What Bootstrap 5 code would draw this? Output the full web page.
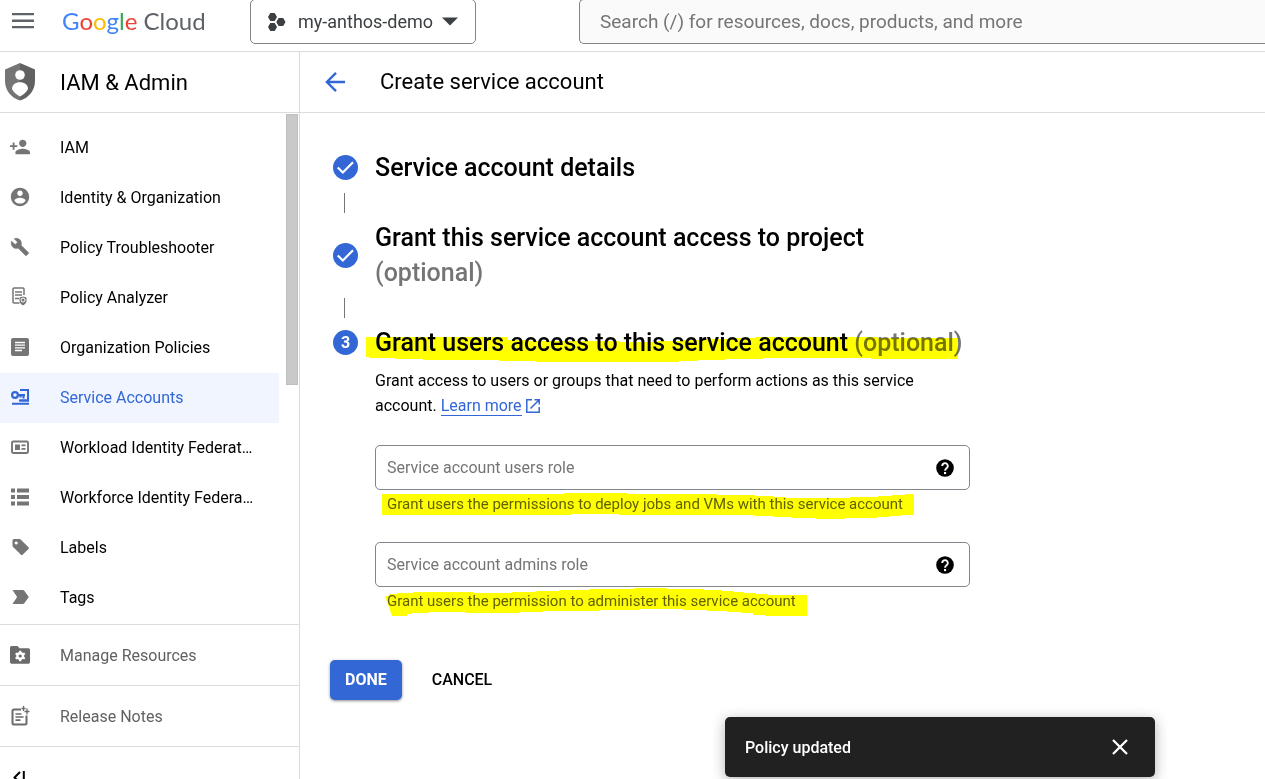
<!DOCTYPE html>
<html lang="en">
<head>
<meta charset="utf-8">
<meta name="viewport" content="width=device-width, initial-scale=1">
<title>Create service account – IAM &amp; Admin</title>
<link href="https://cdn.jsdelivr.net/npm/bootstrap@5.3.0/dist/css/bootstrap.min.css" rel="stylesheet">
<style>
  :root { --g-blue: #3367d6; --g-line: #dadce0; --g-grey: #757575; }
  body { font-family: Roboto, "Liberation Sans", sans-serif; font-size: 16px; line-height: 25px; color: #000; background: #fff; }
  svg { display: block; flex: none; }
  .topbar { height: 52px; border-bottom: 1px solid var(--g-line); flex: none; }
  .icon-btn { border: 0; background: none; padding: 0; color: inherit; }
  .menu-btn { width: 62px; padding-left: 12px; color: #5f6368; }
  .brand { font: 24px/42px Lato, sans-serif; color: #5f6368; width: 188px; }
  .brand:hover { color: #5f6368; }
  .c-b { color: #4285f4; } .c-r { color: #ea4335; } .c-y { color: #fbbc05; } .c-g { color: #34a853; }
  .top-field { height: 45px; margin-top: -1px; border: 1px solid #80868b; border-radius: 5px; }
  .project-btn { width: 226px; padding: 0 17px; background: #fff; color: #3c4043; font-size: 18px; margin-right: 103px; }
  .search-box { background: #fafafa; border-right: 0; border-radius: 5px 0 0 5px; padding: 0 20px; font-size: 19px; min-width: 0; }
  .search-box::placeholder, .role-field input::placeholder { color: var(--g-grey); opacity: 1; }
  .sidebar { width: 300px; border-right: 1px solid var(--g-line); flex: none; }
  .title-row { height: 61px; border-bottom: 1px solid var(--g-line); flex: none; font-size: 22px; }
  .title-row h1 { font-size: inherit; }
  .side-title { padding-left: 5px; gap: 25px; }
  .side-list { width: 279px; padding: 10px 0 1px; }
  .side-link { height: 50px; padding: 0 23px 2px 9px; gap: 29px; color: #000; text-decoration: none; }
  .side-link svg { color: var(--g-grey); }
  .side-link.active { background: #f0f5ff; color: var(--g-blue); }
  .side-link.active svg { color: var(--g-blue); }
  .scroll-thumb { width: 12px; height: 271px; margin: 1px 1px 0 0; background: #c9c9c9; border: 1px solid #bdbdbd; }
  .side-foot { height: 61px; padding-bottom: 0; border-top: 1px solid var(--g-line); color: #616161; }
  .side-foot svg { color: #6b6b6b; }
  .collapse-btn { padding: 22px 0 0 9px; border-top: 1px solid var(--g-line); }
  .main-title { padding-left: 25px; gap: 34px; }
  .steps { padding: 37px 30px 0 33px; max-width: 695px; }
  .step { gap: 17px; }
  .step h2 { font-size: 25px; line-height: 35px; font-weight: 500; margin: 0; }
  .step h2 span { color: var(--g-grey); }
  .step-num { width: 25px; height: 25px; border-radius: 50%; background: var(--g-blue); color: #fff; flex: none; font-weight: 700; }
  .connector { width: 1px; height: 20px; margin: 8px 0 7px 11px; background: var(--g-grey); }
  .step-body { padding: 8px 0 0 42px; margin-right: -5px; }
  .intro { margin-bottom: 27px; }
  .learn { color: var(--g-blue); text-decoration: none; border-bottom: 1px solid var(--g-blue); }
  .role-field { height: 45px; border: 1px solid #80868b; border-radius: 5px; padding: 0 12px 0 11px; }
  .role-field input { border: 0; outline: 0; padding: 0; min-width: 0; background: none; }
  .helper { font-size: 15px; line-height: 20px; margin: 4px 0 28px; padding-left: 12px; color: #616161; }
  .marker { position: absolute; mix-blend-mode: multiply; pointer-events: none; fill: #ff0; overflow: visible; }
  .actions { padding: 21px 30px; gap: 15px; }
  .btn-flat { height: 40px; padding: 0 15px; border: 0; border-radius: 5px; font-size: 16px; font-weight: 500; color: #000; }
  .btn-done, .btn-done:hover { background: var(--g-blue); color: #fff; font-weight: 700; box-shadow: 0 1px 3px rgba(0,0,0,.45); }
  .snack { right: 110px; bottom: 2px; width: 430px; max-width: 80vw; height: 60px; padding: 0 23px 0 20px; border-radius: 5px; background: #212121; color: #fff; font-weight: 500; box-shadow: 0 3px 14px rgba(0,0,0,.3); z-index: 5; }
</style>
</head>
<body class="d-flex flex-column vh-100 overflow-hidden">

<header class="topbar d-flex align-items-start overflow-hidden">
  <button class="icon-btn menu-btn" type="button" aria-label="Main menu">
    <svg class="mt-2" width="24" height="26" viewBox="0 0 24 26" fill="currentColor"><path d="M0 5h22v2.300H0zM0 11.600h22v2.300H0zM0 18h22v2.300H0z"/></svg>
  </button>
  <a class="brand text-decoration-none text-nowrap" href="#"><span class="c-b">G</span><span class="c-r">o</span><span class="c-y">o</span><span class="c-b">g</span><span class="c-g">l</span><span class="c-r">e</span> Cloud</a>
  <button class="top-field project-btn d-flex align-items-center flex-shrink-0 text-nowrap" type="button">
    <svg width="18" height="20" viewBox="0 0 18 20" fill="currentColor"><path d="M2.300 1h4.400L9 5 6.700 9H2.300L0 5zM2.300 11h4.400L9 15l-2.300 4H2.300L0 15zM10.600 6h4.600L17.500 10l-2.300 4h-4.600L8.300 10z"/></svg>
    <span class="ms-2 ps-1">my-anthos-demo</span>
    <svg class="ms-auto" width="16" height="9" viewBox="0 0 16 9" fill="currentColor"><path d="M0 .5h16L8 8.500z"/></svg>
  </button>
  <input class="top-field search-box flex-grow-1" type="search" aria-label="Search" placeholder="Search (/) for resources, docs, products, and more">
</header>

<div class="d-flex flex-grow-1 overflow-hidden">
  <aside class="sidebar d-flex flex-column overflow-hidden">
    <div class="title-row side-title d-flex align-items-center">
      <svg width="30" height="38" viewBox="0 0 30 38"><path fill="#757575" d="M15 0 0 6.500v11.500c0 9 6 17 15 19.500z"/><path fill="#616161" d="M15 0l15 6.500v11.500c0 9-6 17-15 19.500z"/><circle cx="15" cy="12" r="4.800" fill="#fff"/><path fill="#fff" d="M7 26c0-4.500 3.500-6.800 8-6.800s8 2.300 8 6.800c-1.500 3-4.500 6-8 7.500-3.500-1.500-6.500-4.500-8-7.500z"/></svg>
      <span>IAM &amp; Admin</span>
    </div>
    <div class="d-flex justify-content-between flex-shrink-0">
      <nav class="side-list" aria-label="IAM sections">
        <a class="side-link d-flex align-items-center" href="#"><svg width="22" height="22" viewBox="0 0 24 24" fill="currentColor"><path d="M15 12c2.210 0 4-1.790 4-4s-1.790-4-4-4-4 1.790-4 4 1.790 4 4 4zm-9-2V7H4v3H1v2h3v3h2v-3h3v-2H6zm9 4c-2.670 0-8 1.340-8 4v2h16v-2c0-2.660-5.330-4-8-4z"/></svg><span class="text-truncate">IAM</span></a>
        <a class="side-link d-flex align-items-center" href="#"><svg width="22" height="22" viewBox="0 0 24 24" fill="currentColor"><path d="M12 2C6.480 2 2 6.480 2 12s4.480 10 10 10 10-4.480 10-10S17.520 2 12 2zm0 3c1.660 0 3 1.340 3 3s-1.340 3-3 3-3-1.340-3-3 1.340-3 3-3zm0 14.200c-2.500 0-4.710-1.280-6-3.220.030-1.990 4-3.080 6-3.080 1.990 0 5.970 1.090 6 3.080-1.290 1.940-3.500 3.220-6 3.220z"/></svg><span class="text-truncate">Identity &amp; Organization</span></a>
        <a class="side-link d-flex align-items-center" href="#"><svg width="22" height="22" viewBox="0 0 24 24" fill="currentColor"><g transform="translate(1.500 1.500) scale(.87)"><path d="M22.700 19l-9.100-9.100c.9-2.300.4-5-1.500-6.900-2-2-5-2.400-7.400-1.300L9 6 6 9 1.600 4.700C.4 7.100.9 10.100 2.900 12.100c1.900 1.900 4.600 2.400 6.900 1.500l9.100 9.100c.4.400 1 .4 1.400 0l2.300-2.300c.5-.4.5-1.100.1-1.400z" stroke="currentColor" stroke-width=".5"/></g></svg><span class="text-truncate">Policy Troubleshooter</span></a>
        <a class="side-link d-flex align-items-center" href="#"><svg width="22" height="22" viewBox="0 0 22 22" fill="none" stroke="currentColor" stroke-width="1.500"><path d="M10.500 17H5q-1 0-1-1V3q0-1 1-1h9q1 0 1 1v6M6 6h7M6 9h7M6 12.500h4"/><path fill="currentColor" stroke="none" d="M14 10.500l3.500 1v3c0 2-1.500 4-3.500 5-2-1-3.500-3-3.500-5v-3z"/><circle cx="14" cy="14" r="2" stroke="#fff" stroke-width="1"/></svg><span class="text-truncate">Policy Analyzer</span></a>
        <a class="side-link d-flex align-items-center" href="#"><svg width="22" height="22" viewBox="0 0 22 22"><rect x="2" y="2" width="18" height="18" rx="2" fill="currentColor"/><path d="M6 6.500h10M6 9.200h10M6 11.900h10M6 14.500h7" stroke="#fff" stroke-width="1.300"/></svg><span class="text-truncate">Organization Policies</span></a>
        <a class="side-link active d-flex align-items-center" href="#" aria-current="page"><svg width="22" height="22" viewBox="0 0 22 22" fill="none" stroke="currentColor"><path d="M11 4h8v10.500h-8" stroke-width="2"/><circle cx="6" cy="9" r="2.900" stroke-width="2.200"/><path d="M9 9h7M14.500 9v3.500M11.500 9v2.500" stroke-width="2.200"/><path d="M3 17.800h17M10 14.500h10" stroke-width="2"/></svg><span class="text-truncate">Service Accounts</span></a>
        <a class="side-link d-flex align-items-center" href="#"><svg width="22" height="22" viewBox="0 0 22 22" fill="none" stroke="currentColor"><rect x="3" y="5.500" width="16" height="11.500" rx="1.200" stroke-width="1.900"/><path fill="currentColor" stroke="none" d="M6 8.500h5v5.500H6zM12.500 8.500h4v1.700h-4zM12.500 12h4v1.700h-4z"/></svg><span class="text-truncate">Workload Identity Federat…</span></a>
        <a class="side-link d-flex align-items-center" href="#"><svg width="22" height="22" viewBox="0 0 22 22" fill="currentColor"><path d="M2 2.500h4v4H2zM8 2.500h12v4H8zM2 9h4v4H2zM8 9h12v4H8zM2 15.500h4v4H2zM8 15.500h12v4H8z"/></svg><span class="text-truncate">Workforce Identity Federa…</span></a>
        <a class="side-link d-flex align-items-center" href="#"><svg width="22" height="22" viewBox="0 0 22 22" fill="currentColor"><path fill-rule="evenodd" d="M5 3h5.500q.7 0 1.200.5l7.800 7.800q.8.800 0 1.600l-5.900 5.900q-.8.800-1.600 0L4.100 11Q3.500 10.500 3.500 9.700V4.500Q3.500 3 5 3zm2.200 2.400a1.600 1.600 0 1 0 .01 0z"/></svg><span class="text-truncate">Labels</span></a>
        <a class="side-link d-flex align-items-center" href="#"><svg width="22" height="22" viewBox="0 0 22 22" fill="currentColor"><path d="M3.500 4h10.300q.9 0 1.500.8l4.500 6.200-4.500 6.200q-.6.800-1.500.8H3.500l4.600-7z"/></svg><span class="text-truncate">Tags</span></a>
      </nav>
      <div class="scroll-thumb"></div>
    </div>
    <a class="side-link side-foot d-flex align-items-center flex-shrink-0" href="#"><svg width="22" height="22" viewBox="0 0 22 22"><path fill="currentColor" d="M2.500 2h6l2 2.300h9q1.500 0 1.500 1.500V18q0 1.700-1.500 1.700h-17Q1 19.700 1 18V3.500Q1 2 2.500 2z"/><circle cx="11.200" cy="12" r="2.800" fill="none" stroke="#fff" stroke-width="2.400"/><path d="M11.200 6.700v2.200M11.200 15.100v2.200M6.600 9.400l1.900 1.100M13.900 13.500l1.900 1.100M6.600 14.600l1.900-1.100M13.900 10.500l1.900-1.100" stroke="#fff" stroke-width="2.200"/></svg><span>Manage Resources</span></a>
    <a class="side-link side-foot d-flex align-items-center flex-shrink-0" href="#"><svg width="22" height="22" viewBox="0 0 22 22" fill="none" stroke="currentColor" stroke-width="2"><path d="M12 4.500H5q-1.500 0-1.500 1.500v12q0 1.500 1.500 1.500h11q1.500 0 1.500-1.500v-7.500"/><path d="M6.500 9h6M6.500 12h8M6.500 15.200h5" stroke-width="1.700"/><path d="M14.500 1v5M12.500 3.500h4M18 3.500v6M15.500 6.500h5" stroke-width="1.300"/></svg><span>Release Notes</span></a>
    <button class="icon-btn collapse-btn flex-shrink-0 text-start" type="button" aria-label="Collapse navigation">
      <svg width="22" height="22" viewBox="0 0 22 22" fill="none" stroke="#000" stroke-width="2"><path d="M11 3 5.500 8.500 11 14M14.800 2v13"/></svg>
    </button>
  </aside>

  <main class="flex-grow-1 overflow-hidden">
    <div class="title-row main-title d-flex align-items-center">
      <button class="icon-btn" type="button" aria-label="Back"><svg width="21" height="22" viewBox="0 0 21 22" fill="none" stroke="#3367d6" stroke-width="2.400"><path d="M20 11H2M11 1.900 1.900 11 11 20.100"/></svg></button>
      <h1 class="m-0 fw-normal">Create service account</h1>
    </div>

    <div class="steps">
      <div class="step d-flex align-items-center">
        <span class="step-num"><svg width="25" height="25" viewBox="0 0 25 25" fill="none" stroke="#fff" stroke-width="2.200"><path d="M4.800 12.500l5 5L20 7.200"/></svg></span>
        <h2>Service account details</h2>
      </div>
      <div class="connector"></div>
      <div class="step d-flex align-items-center">
        <span class="step-num"><svg width="25" height="25" viewBox="0 0 25 25" fill="none" stroke="#fff" stroke-width="2.200"><path d="M4.800 12.500l5 5L20 7.200"/></svg></span>
        <h2>Grant this service account access to project <span class="d-block">(optional)</span></h2>
      </div>
      <div class="connector"></div>
      <div class="step d-flex align-items-center">
        <span class="step-num text-center">3</span>
        <h2 class="position-relative text-nowrap">Grant users access to this service account <span>(optional)</span>
          <svg class="marker start-0 top-0" width="595" height="35" viewBox="375 325 595 35"><path d="M366 337H508v3h22v1h90v1h38v-1h22v-1h22v-1h30v-1h23v-1h123v1h80V359h-87v-1h-108v1h-37v1h-28v1h-19v1h-143v-1h-37v-1h-76v-1h-28v-1h-26v-1h-3z"/></svg>
        </h2>
      </div>
      <div class="step-body">
        <p class="intro">Grant access to users or groups that need to perform actions as this service account.
          <a class="learn" href="#">Learn more</a>
          <svg class="d-inline-block align-text-bottom" width="14" height="18" viewBox="0 0 14 18" fill="none" stroke="#3367d6" stroke-width="1.500"><path d="M6 2.700H.8v12.500h12.400V10M8.500 2.700h4.700v4.700M13 3 4.500 11.500"/></svg>
        </p>
        <div class="role-field d-flex align-items-center">
          <input class="flex-grow-1" id="users-role" type="text" aria-label="Service account users role" aria-describedby="users-help" placeholder="Service account users role">
          <button class="icon-btn" type="button" aria-label="Help for users role"><svg width="24" height="24" viewBox="0 0 24 24"><circle cx="12" cy="12" r="8.800"/><path d="M9.200 10a2.800 2.800 0 1 1 4.600 2.100c-1 .8-1.700 1.200-1.700 2.700" fill="none" stroke="#fff" stroke-width="1.900"/><rect x="11" y="16" width="2.100" height="2.100" fill="#fff"/></svg></button>
        </div>
        <p class="helper position-relative text-nowrap" id="users-help">Grant users the permissions to deploy jobs and VMs with this service account
          <svg class="marker start-0 top-0" width="595" height="20" viewBox="375 494 595 20"><path d="M382 494h182v-1h63v1h90v1h38v1h18v1h12v1h65v-1h28v-1h14v-1h13v-1h9V515h-13v1h-12v1h-12v1h-32v1h-29v-1h-24v-1h-18v-1h-20v-1H619v-1h-47v1H382z"/></svg>
        </p>
        <div class="role-field d-flex align-items-center">
          <input class="flex-grow-1" id="admins-role" type="text" aria-label="Service account admins role" aria-describedby="admins-help" placeholder="Service account admins role">
          <button class="icon-btn" type="button" aria-label="Help for admins role"><svg width="24" height="24" viewBox="0 0 24 24"><circle cx="12" cy="12" r="8.800"/><path d="M9.200 10a2.800 2.800 0 1 1 4.600 2.100c-1 .8-1.700 1.200-1.700 2.700" fill="none" stroke="#fff" stroke-width="1.900"/><rect x="11" y="16" width="2.100" height="2.100" fill="#fff"/></svg></button>
        </div>
        <p class="helper position-relative text-nowrap" id="admins-help">Grant users the permission to administer this service account
          <svg class="marker start-0 top-0" width="595" height="20" viewBox="375 591 595 20"><path d="M385 596h4v-2h8v-1h16v-1h60v1h39v-1h24v-1h23v-1h30v-1h45v-1h33v1h37v1h18v1h12v1h10v1h12v1h12v1h39v21h-42v-1h-12v-2h-12v-1h-14v-1h-20v-1h-24v-1h-43v1h-40v1h-57v1h-23v1h-55v-1h-36v1h-17v1h-5v2h-15z"/></svg>
        </p>
      </div>
    </div>

    <div class="actions d-flex">
      <button class="btn btn-flat btn-done" type="button">DONE</button>
      <button class="btn btn-flat" type="button">CANCEL</button>
    </div>
  </main>
</div>

<div class="snack position-fixed d-flex align-items-center justify-content-between" role="status">
  <span>Policy updated</span>
  <button class="icon-btn" type="button" aria-label="Dismiss"><svg width="24" height="24" viewBox="0 0 24 24" fill="none" stroke="#fff" stroke-width="2.300"><path d="M5 5l14 14M19 5 5 19"/></svg></button>
</div>

<script src="https://cdn.jsdelivr.net/npm/bootstrap@5.3.0/dist/js/bootstrap.bundle.min.js"></script>
</body>
</html>
